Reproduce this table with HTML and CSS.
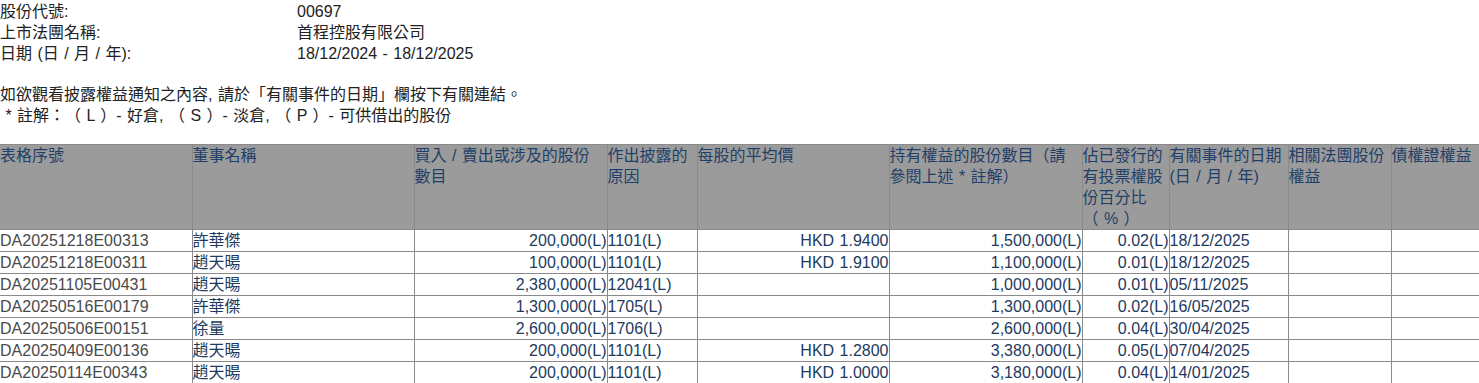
FILE: index.html
```html
<!DOCTYPE html>
<html lang="zh-Hant">
<head>
<meta charset="utf-8">
<title>披露權益</title>
<link rel="stylesheet" href="styles.css">
</head>
<body>
<table class="info">
  <tr><td class="info-label">股份代號:</td><td>00697</td></tr>
  <tr><td class="info-label">上市法團名稱:</td><td>首程控股有限公司</td></tr>
  <tr><td class="info-label">日期 (日 / 月 / 年):</td><td>18/12/2024 - 18/12/2025</td></tr>
</table>
<div class="notes">
  <p>如欲觀看披露權益通知之內容, 請於「有關事件的日期」欄按下有關連結。</p>
  <p>&nbsp;* 註解：（ L ）- 好倉, （ S ）- 淡倉, （ P ）- 可供借出的股份</p>
</div>
<table class="grid">
  <colgroup>
    <col class="c1"><col class="c2"><col class="c3"><col class="c4"><col class="c5">
    <col class="c6"><col class="c7"><col class="c8"><col class="c9"><col class="c10">
  </colgroup>
  <thead>
    <tr>
      <th>表格序號</th>
      <th>董事名稱</th>
      <th>買入 / 賣出或涉及的股份<br>數目</th>
      <th>作出披露的<br>原因</th>
      <th>每股的平均價</th>
      <th>持有權益的股份數目（請<br>參閱上述 * 註解）</th>
      <th>佔已發行的<br>有投票權股<br>份百分比<br>（ % ）</th>
      <th>有關事件的日期<br>(日 / 月 / 年)</th>
      <th>相關法團股份<br>權益</th>
      <th>債權證權益</th>
    </tr>
  </thead>
  <tbody>
    <tr><td class="id">DA20251218E00313</td><td>許華傑</td><td class="r">200,000(L)</td><td>1101(L)</td><td class="r">HKD 1.9400</td><td class="r">1,500,000(L)</td><td class="r">0.02(L)</td><td>18/12/2025</td><td></td><td></td></tr>
    <tr><td class="id">DA20251218E00311</td><td>趙天暘</td><td class="r">100,000(L)</td><td>1101(L)</td><td class="r">HKD 1.9100</td><td class="r">1,100,000(L)</td><td class="r">0.01(L)</td><td>18/12/2025</td><td></td><td></td></tr>
    <tr><td class="id">DA20251105E00431</td><td>趙天暘</td><td class="r">2,380,000(L)</td><td>12041(L)</td><td class="r"></td><td class="r">1,000,000(L)</td><td class="r">0.01(L)</td><td>05/11/2025</td><td></td><td></td></tr>
    <tr><td class="id">DA20250516E00179</td><td>許華傑</td><td class="r">1,300,000(L)</td><td>1705(L)</td><td class="r"></td><td class="r">1,300,000(L)</td><td class="r">0.02(L)</td><td>16/05/2025</td><td></td><td></td></tr>
    <tr><td class="id">DA20250506E00151</td><td>徐量</td><td class="r">2,600,000(L)</td><td>1706(L)</td><td class="r"></td><td class="r">2,600,000(L)</td><td class="r">0.04(L)</td><td>30/04/2025</td><td></td><td></td></tr>
    <tr><td class="id">DA20250409E00136</td><td>趙天暘</td><td class="r">200,000(L)</td><td>1101(L)</td><td class="r">HKD 1.2800</td><td class="r">3,380,000(L)</td><td class="r">0.05(L)</td><td>07/04/2025</td><td></td><td></td></tr>
    <tr><td class="id">DA20250114E00343</td><td>趙天暘</td><td class="r">200,000(L)</td><td>1101(L)</td><td class="r">HKD 1.0000</td><td class="r">3,180,000(L)</td><td class="r">0.04(L)</td><td>14/01/2025</td><td></td><td></td></tr>
  </tbody>
</table>
</body>
</html>
```

FILE: styles.css
```css
html, body {
  margin: 0;
  padding: 0;
  background: #fff;
}
body {
  font-family: "Liberation Sans", "Noto Sans CJK TC", Arial, sans-serif;
  font-size: 16px;
  line-height: 21px;
  color: #222;
  text-spacing-trim: space-all;
  word-spacing: 1px;
}
.info {
  border-collapse: collapse;
  margin-top: 1px;
  margin-bottom: 20px;
}
.info td {
  padding: 0;
  vertical-align: top;
}
.info-label {
  width: 297px;
}
.notes p {
  margin: 0;
}
.notes {
  margin-bottom: 18px;
}
.grid {
  border-collapse: collapse;
  table-layout: fixed;
  width: 1480px;
}
.c1 { width: 192px; }
.c2 { width: 222px; }
.c3 { width: 193px; }
.c4 { width: 90px; }
.c5 { width: 192px; }
.c6 { width: 193px; }
.c7 { width: 87px; }
.c8 { width: 119px; }
.c9 { width: 103px; }
.c10 { width: 89px; }
.grid th,
.grid td {
  border: 1px solid #8a8a8a;
  padding: 0;
  vertical-align: top;
  text-align: left;
  font-weight: normal;
  line-height: 21px;
  color: #1d3a5f;
  white-space: nowrap;
  overflow: hidden;
}
.grid th:first-child,
.grid td:first-child {
  border-left: none;
}
.grid th {
  background: #9b9b9b;
  color: #1f3f68;
  height: 84px;
}
.grid td {
  height: 21px;
}
.grid td.r {
  text-align: right;
}
.grid td.id {
  color: #4a4a4a;
}
```
